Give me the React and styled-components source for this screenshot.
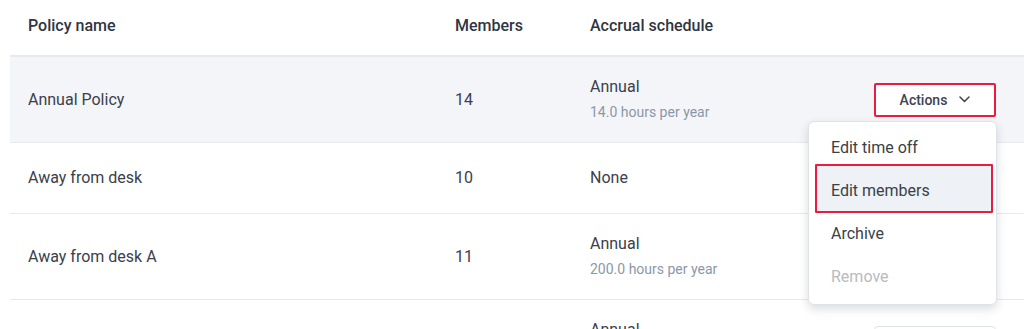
import React from "react";
import styled, { createGlobalStyle } from "styled-components";

const Global = createGlobalStyle`
  html, body { margin: 0; padding: 0; background: #fff; overflow: hidden; }
  body { font-family: Roboto, "Noto Sans", Arial, sans-serif; color: #3a404c; -webkit-font-smoothing: antialiased; }
  * { box-sizing: border-box; }
`;

const Page = styled.div`
  padding-left: 10px;
  width: 1024px;
`;

const Row = styled.div`
  display: grid;
  grid-template-columns: 427px 135px 1fr 180px;
  align-items: center;
  background: ${(p) => (p.$active ? "#f4f5f8" : "#fff")};
  border-bottom: ${(p) => (p.$head ? "2px solid #e6eaef" : "1px solid #e6eaef")};
`;

const HeadCell = styled.div`
  padding: 14px 0 17px 18px;
  font-size: 16px;
  line-height: 24px;
  font-weight: 500;
  color: #2f3541;
`;

const Cell = styled.div`
  padding: 18px 0 18px 18px;
  font-size: 16px;
  line-height: 24px;
  color: #3a404c;
  min-height: 70px;
  display: flex;
  flex-direction: column;
  justify-content: center;
`;

const ActionCell = styled.div`
  position: relative;
  display: flex;
  justify-content: flex-end;
  padding-right: 28px;
`;

const Sub = styled.div`
  font-size: 14px;
  line-height: 23px;
  margin-top: 2px;
  color: #8c97a9;
`;

const ActionsButton = styled.button`
  height: 34px;
  width: 122px;
  display: flex;
  align-items: center;
  justify-content: center;
  gap: 12px;
  background: #fff;
  border: ${(p) => (p.$marked ? "2px solid #ea1b3f" : "1px solid #dde2e8")};
  border-radius: ${(p) => (p.$marked ? "2px" : "4px")};
  font-family: inherit;
  font-size: 14px;
  font-weight: 500;
  color: #3d4452;
  padding: 0;
  cursor: pointer;
`;

const Menu = styled.div`
  position: absolute;
  top: calc(100% + 4px);
  right: 27px;
  width: 189px;
  background: #fff;
  border: 1px solid #dfe3e8;
  border-radius: 6px;
  box-shadow: 0 4px 10px rgba(30, 40, 60, 0.16);
  padding: 4px 0 6px;
  z-index: 5;
`;

const Item = styled.div`
  position: relative;
  height: 43px;
  display: flex;
  align-items: center;
  padding-left: 22px;
  font-size: 16px;
  color: ${(p) => (p.$disabled ? "#b7bbc2" : "#3a3f48")};

  ${(p) =>
    p.$marked &&
    `
    &::before {
      content: "";
      position: absolute;
      left: 6px;
      right: 3px;
      top: -5px;
      bottom: -1px;
      background: #eef1f5;
      border: 2px solid #ea1b3f;
      border-radius: 1px;
    }
  `}
`;

const ItemText = styled.span`
  position: relative;
`;

const Chevron = () => (
  <svg width="11" height="7" viewBox="0 0 11 7" fill="none">
    <path d="M1 1l4.5 4.5L10 1" stroke="#3d4452" strokeWidth="1.5" strokeLinecap="round" strokeLinejoin="round" />
  </svg>
);

const rows = [
  { name: "Annual Policy", members: "14", sched: "Annual", sub: "14.0 hours per year", active: true, menu: true },
  { name: "Away from desk", members: "10", sched: "None" },
  { name: "Away from desk A", members: "11", sched: "Annual", sub: "200.0 hours per year" },
  { name: "Vacation", members: "12", sched: "Annual", sub: "80.0 hours per year" },
];

export default function App() {
  return (
    <Page>
      <Global />
      <Row $head>
        <HeadCell>Policy name</HeadCell>
        <HeadCell>Members</HeadCell>
        <HeadCell>Accrual schedule</HeadCell>
        <HeadCell />
      </Row>
      {rows.map((r) => (
        <Row key={r.name} $active={r.active}>
          <Cell>{r.name}</Cell>
          <Cell>{r.members}</Cell>
          <Cell>
            <div>{r.sched}</div>
            {r.sub && <Sub>{r.sub}</Sub>}
          </Cell>
          <ActionCell>
            <ActionsButton $marked={r.menu}>
              Actions <Chevron />
            </ActionsButton>
            {r.menu && (
              <Menu>
                <Item><ItemText>Edit time off</ItemText></Item>
                <Item $marked><ItemText>Edit members</ItemText></Item>
                <Item><ItemText>Archive</ItemText></Item>
                <Item $disabled><ItemText>Remove</ItemText></Item>
              </Menu>
            )}
          </ActionCell>
        </Row>
      ))}
    </Page>
  );
}
